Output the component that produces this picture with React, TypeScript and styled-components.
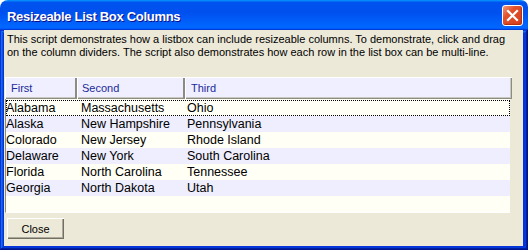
import React from "react";
import styled, { createGlobalStyle } from "styled-components";

const GlobalStyle = createGlobalStyle`
  html, body {
    margin: 0;
    padding: 0;
    background: #ffffff;
  }
  body {
    font-family: "Liberation Sans", Arial, sans-serif;
  }
`;

const Window = styled.div`
  width: 528px;
  height: 250px;
  display: flex;
  flex-direction: column;
  border-radius: 8px 7px 0 0;
  overflow: hidden;
`;

const TitleBar = styled.div`
  height: 30px;
  flex: none;
  display: flex;
  align-items: center;
  justify-content: space-between;
  padding: 0 5px 0 7px;
  box-sizing: border-box;
  background: linear-gradient(
    180deg,
    #0997ff,
    #0053ee 8%,
    #0050ee 40%,
    #0066ff 88%,
    #0066ff 93%,
    #005bff 95%,
    #003dd7 96%,
    #003dd7
  );
`;

const Title = styled.span`
  color: #ffffff;
  font-size: 13px;
  font-weight: bold;
  letter-spacing: -0.3px;
  text-shadow: 1px 1px #0f1089;
  padding-top: 2px;
`;

const CloseBox = styled.button`
  width: 21px;
  height: 21px;
  padding: 0;
  margin-top: 1px;
  border: 1px solid #ffffff;
  border-radius: 3px;
  display: flex;
  align-items: center;
  justify-content: center;
  background: linear-gradient(135deg, #f09a7a 0%, #e2502c 35%, #d23e1c 100%);
  box-shadow: inset -1px -1px 1px #b03010;
`;

const Frame = styled.div`
  flex: 1;
  display: flex;
  padding: 0 5px 4px 4px;
  background: #0831d9;
  box-shadow: inset -1px -1px #00138c, inset 1px 1px #0831d9,
    inset -2px -2px #001ea0, inset 2px 2px #166aee,
    inset -3px -3px #003bda, inset 3px 3px #0855dd;
`;

const Body = styled.div`
  flex: 1;
  display: flex;
  flex-direction: column;
  background: #ece9d8;
`;

const Description = styled.p`
  margin: 3px 0 0 3px;
  font-size: 11px;
  line-height: 13px;
  color: #000000;
  width: 500px;
`;

const ListBox = styled.div`
  margin: 18px 0 0 1px;
  width: 507px;
  display: flex;
  flex-direction: column;
`;

const Header = styled.div`
  height: 22px;
  display: grid;
  grid-template-columns: 71px 108px 1fr;
  background: #efefff;
  border-top: 1px solid #ffffff;
  border-left: 1px solid #ffffff;
  box-sizing: border-box;
  box-shadow: inset -1px -1px #8c8c82, inset -2px -2px #c8c8c0;
`;

const HeaderCell = styled.div<{ $last?: boolean }>`
  font-size: 11px;
  line-height: 20px;
  color: #1c2a98;
  padding-left: ${(p) => (p.$last ? 6 : 5)}px;
  border-right: ${(p) => (p.$last ? "none" : "2px solid #8c8c82")};
  box-shadow: ${(p) => (p.$last ? "none" : "1px 0 0 #ffffff")};
`;

const Rows = styled.div`
  height: 114px;
  width: 505px;
  padding-top: 1px;
  box-sizing: border-box;
  background: #fffff5;
  border-left: 1px solid #8c8c82;
  border-bottom: 1px solid #ffffff;
`;

const Row = styled.div<{ $alt: boolean; $focus?: boolean }>`
  height: 16px;
  display: grid;
  grid-template-columns: 75px 106px 1fr;
  align-items: center;
  box-sizing: border-box;
  background: ${(p) => (p.$alt ? "#eeeeff" : "#fffff5")};
  outline: ${(p) => (p.$focus ? "1px dotted #000000" : "none")};
  outline-offset: -1px;
  font-size: 12.5px;
  line-height: 16px;
  color: #000000;
`;

const Cell = styled.span`
  white-space: nowrap;
`;

const Footer = styled.div`
  display: flex;
  padding: 5px 0 0 3px;
`;

const Button = styled.button`
  width: 57px;
  height: 21px;
  padding: 0;
  font-family: "Liberation Sans", Arial, sans-serif;
  font-size: 11px;
  color: #000000;
  background: #ece9d8;
  border: none;
  box-shadow: inset 1px 1px #ffffff, inset -1px -1px #716f64,
    inset -2px -2px #aca899;
`;

const rows: [string, string, string][] = [
  ["Alabama", "Massachusetts", "Ohio"],
  ["Alaska", "New Hampshire", "Pennsylvania"],
  ["Colorado", "New Jersey", "Rhode Island"],
  ["Delaware", "New York", "South Carolina"],
  ["Florida", "North Carolina", "Tennessee"],
  ["Georgia", "North Dakota", "Utah"],
];

export default function App() {
  return (
    <>
      <GlobalStyle />
      <Window>
        <TitleBar>
          <Title>Resizeable List Box Columns</Title>
          <CloseBox aria-label="Close">
            <svg width="13" height="13" viewBox="0 0 13 13">
              <path
                d="M2 2 L11 11 M11 2 L2 11"
                stroke="#ffffff"
                strokeWidth="2.2"
                strokeLinecap="square"
              />
            </svg>
          </CloseBox>
        </TitleBar>
        <Frame>
          <Body>
            <Description>
              This script demonstrates how a listbox can include resizeable
              columns. To demonstrate, click and drag on the column dividers.
              The script also demonstrates how each row in the list box can be
              multi-line.
            </Description>
            <ListBox>
              <Header>
                <HeaderCell>First</HeaderCell>
                <HeaderCell>Second</HeaderCell>
                <HeaderCell $last>Third</HeaderCell>
              </Header>
              <Rows>
                {rows.map((r, i) => (
                  <Row key={r[0]} $alt={i % 2 === 1} $focus={i === 0}>
                    <Cell>{r[0]}</Cell>
                    <Cell>{r[1]}</Cell>
                    <Cell>{r[2]}</Cell>
                  </Row>
                ))}
              </Rows>
            </ListBox>
            <Footer>
              <Button>Close</Button>
            </Footer>
          </Body>
        </Frame>
      </Window>
    </>
  );
}
